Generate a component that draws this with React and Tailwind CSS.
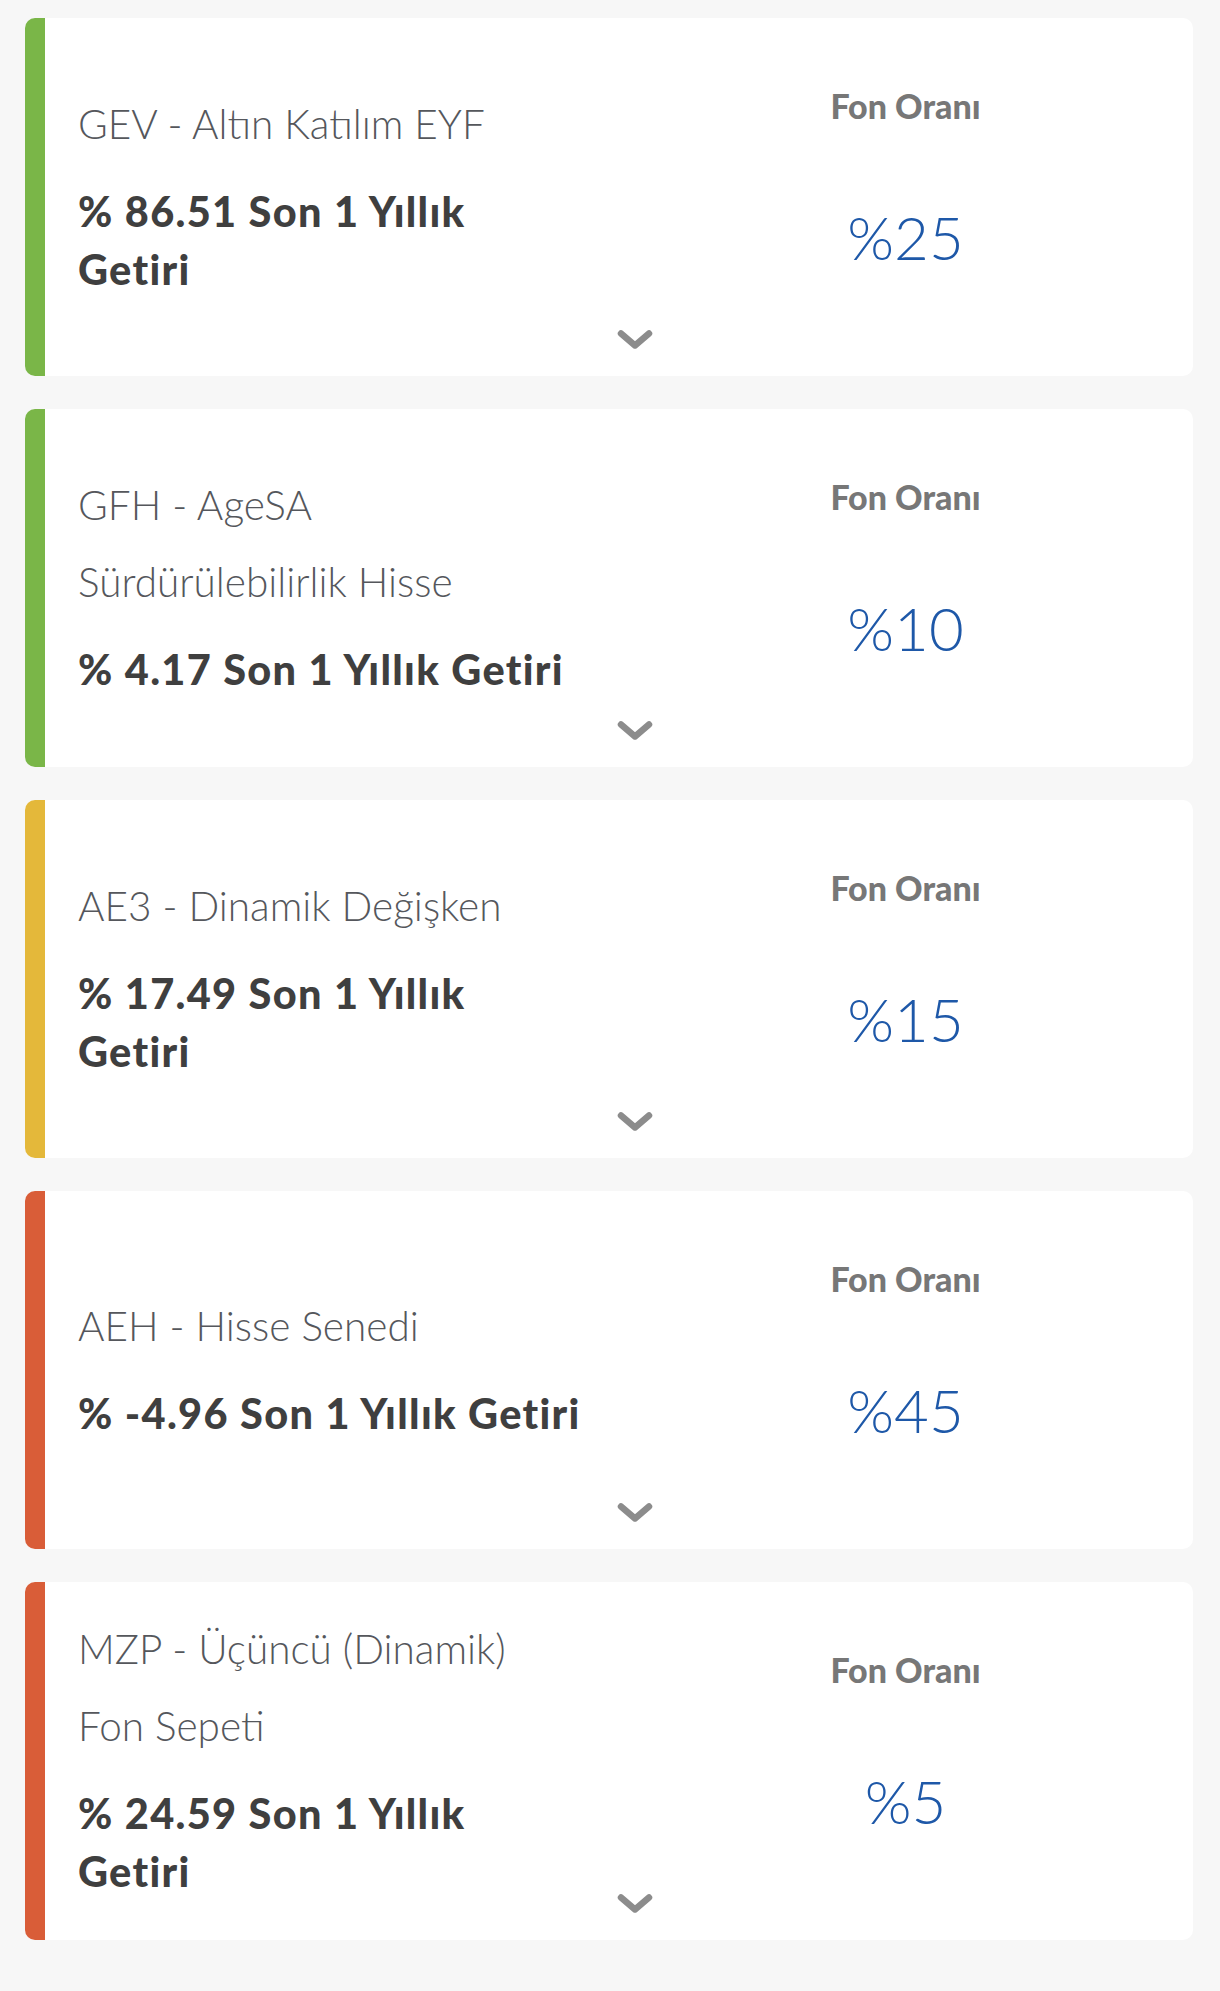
const funds = [
  { title: ['GEV - Altın Katılım EYF'], ret: ['% 86.51 Son 1 Yıllık', 'Getiri'], rate: '%25', bar: 'bg-[#7ab648]' },
  { title: ['GFH - AgeSA', 'Sürdürülebilirlik Hisse'], ret: ['% 4.17 Son 1 Yıllık Getiri'], rate: '%10', bar: 'bg-[#7ab648]' },
  { title: ['AE3 - Dinamik Değişken'], ret: ['% 17.49 Son 1 Yıllık', 'Getiri'], rate: '%15', bar: 'bg-[#e4b83a]' },
  { title: ['AEH - Hisse Senedi'], ret: ['% -4.96 Son 1 Yıllık Getiri'], rate: '%45', bar: 'bg-[#d95d38]' },
  { title: ['MZP - Üçüncü (Dinamik)', 'Fon Sepeti'], ret: ['% 24.59 Son 1 Yıllık', 'Getiri'], rate: '%5', bar: 'bg-[#d95d38]' },
]

function Chevron() {
  return (
    <svg width="36" height="22" viewBox="0 0 36 22" fill="none">
      <path d="M4 4.5 L18 16.5 L32 4.5" stroke="#8c8c8c" strokeWidth="6.5" strokeLinecap="round" strokeLinejoin="round" />
    </svg>
  )
}

function FundCard({ fund }) {
  return (
    <div className="relative flex h-[358px] rounded-[10px] bg-white overflow-hidden">
      <div className={`w-[20px] shrink-0 ${fund.bar}`} />

      {/* Left: name + return */}
      <div className="w-[573px] shrink-0 flex flex-col justify-center pl-[33px] pr-[20px] pb-[12px]">
        <div className="font-light text-[40.5px] leading-[77px] text-[#55575c]">
          {fund.title.map(t => <div key={t}>{t}</div>)}
        </div>
        <div className="mt-[20px] font-black text-[41.5px] leading-[58px] tracking-[1.3px] text-[#3f3f3f] whitespace-nowrap">
          {fund.ret.map(t => <div key={t}>{t}</div>)}
        </div>
      </div>

      {/* Right: ratio */}
      <div className="flex-1 flex flex-col items-center pt-[68px]">
        <p className="font-black text-[34px] leading-[40px] text-[#777777]">Fon Oranı</p>
        <p className="mt-[71px] font-light text-[60px] leading-[80px] text-[#1e58a8]">{fund.rate}</p>
      </div>

      <div className="absolute bottom-[25px] left-[592px]">
        <Chevron />
      </div>
    </div>
  )
}

export default function App() {
  return (
    <div className="min-h-screen bg-[#f7f7f7] pt-[18px] pb-[51px] pl-[25px] pr-[27px] flex flex-col gap-[33px] font-['Lato',sans-serif]">
      {funds.map(f => <FundCard key={f.rate} fund={f} />)}
    </div>
  )
}
